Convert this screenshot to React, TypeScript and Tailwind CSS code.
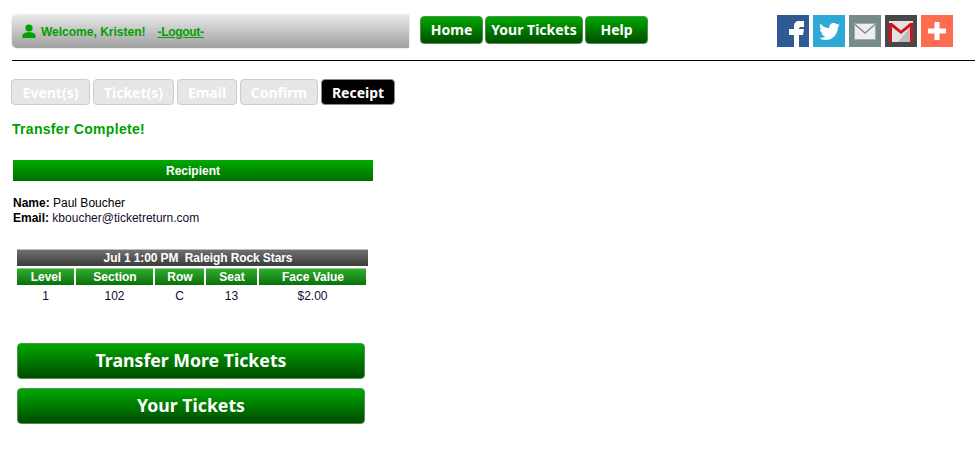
import React from "react";
import { FaTwitter } from "react-icons/fa";

const noto = "font-['Noto_Sans','Open_Sans',sans-serif] font-bold text-white";
const arial = "font-['Liberation_Sans',Arial,sans-serif]";
const greenBtn = "bg-gradient-to-b from-[#00a900] to-[#004d00] border border-[#4f8f4f] rounded-[4px]";

function Social({ bg, children }: { bg: string; children: React.ReactNode }) {
  return <div className={`w-8 h-8 overflow-hidden flex items-center justify-center ${bg}`}>{children}</div>;
}

function Header() {
  return (
    <div className="ml-3 mr-[2px] h-[61px] border-b border-black flex items-start">
      <div className={`w-[397px] h-[33px] mt-[15px] rounded-l-[5px] bg-gradient-to-b from-[#e9e9e9] to-[#a0a0a0] shadow-[0_0_2px_rgba(0,0,0,0.25)] flex items-center pl-[10px] text-[12px] font-bold text-[#00a000] ${arial}`}>
        <svg width="14" height="14" viewBox="0 0 14 14" className="mr-[5px] mb-[1px]">
          <circle cx="7" cy="4" r="3.6" fill="#00a000" />
          <path d="M0.5 14 V11.5 C0.5 9.5 3 8.8 5 8.2 L9 8.2 C11 8.8 13.5 9.5 13.5 11.5 V14 Z" fill="#00a000" />
        </svg>
        <span>Welcome, Kristen!</span>
        <span className="ml-3 underline tracking-[-0.3px]">-Logout-</span>
      </div>
      <nav className="ml-[11px] mt-[16px] flex gap-[2px]">
        {[["Home", "w-[63px]"], ["Your Tickets", "w-[98px]"], ["Help", "w-[63px]"]].map(([t, w]) => (
          <div key={t} className={`h-[28px] pb-[1px] flex items-center justify-center text-[14px] ${w} ${greenBtn} ${noto}`}>{t}</div>
        ))}
      </nav>
      <div className="ml-[129px] mt-[15px] flex gap-1">
        <Social bg="bg-[#2f5a94]">
          <svg width="32" height="32" viewBox="0 0 32 32">
            <path d="M17 32 V20 H12 V14 H17 V11 C17 8 19 6 22 6 H27 V12 H24.5 C22.7 12 22 12.6 22 14 H27 L26 20 H22 V32 Z" fill="#fff" />
          </svg>
        </Social>
        <Social bg="bg-[#2ea8d6]">
          <FaTwitter className="text-white w-[21px] h-[21px]" />
        </Social>
        <Social bg="bg-[#768c8c]">
          <svg width="22" height="17" viewBox="0 0 22 17">
            <rect x="0" y="0" width="22" height="17" fill="#eeeeee" />
            <path d="M0.5 1 L11 10 L21.5 1" fill="none" stroke="#7d8d8d" strokeWidth="1.4" />
            <rect x="0.5" y="0.5" width="21" height="16" fill="none" stroke="#a8a8a8" />
          </svg>
        </Social>
        <Social bg="bg-[#484848]">
          <svg width="24" height="21" viewBox="0 0 24 21">
            <rect x="0" y="0" width="24" height="21" fill="#e2e2e2" />
            <path d="M24 3 V21 H9 Z" fill="#bdbdbd" />
            <path d="M0 21 V2 H3 L12 9.5 L21 2 H24 V21 H21 V6 L12 13 L3 6 V21 Z" fill="#d2121c" />
          </svg>
        </Social>
        <Social bg="bg-[#fe6c50]">
          <svg width="18" height="18" viewBox="0 0 18 18">
            <path d="M6.5 0 H11.5 V6.5 H18 V11.5 H11.5 V18 H6.5 V11.5 H0 V6.5 H6.5 Z" fill="#fff" />
          </svg>
        </Social>
      </div>
    </div>
  );
}

function Tabs() {
  const off = "bg-[#e6e6e6] border border-[#cccccc]";
  return (
    <div className="ml-[11px] mt-[18px] flex gap-[3px]">
      {[["Event(s)", "w-[79px]"], ["Ticket(s)", "w-[81px]"], ["Email", "w-[60px]"], ["Confirm", "w-[78px]"]].map(([t, w]) => (
        <div key={t} className={`h-[26px] rounded-[4px] flex items-center justify-center text-[14px] ${w} ${off} ${noto}`}>{t}</div>
      ))}
      <div className={`h-[26px] w-[74px] rounded-[4px] flex items-center justify-center text-[14px] bg-black border border-[#888] ${noto}`}>Receipt</div>
    </div>
  );
}

function TicketTable() {
  const cols = [
    ["Level", "1", "w-[57px]"],
    ["Section", "102", "w-[77px]"],
    ["Row", "C", "w-[49px]"],
    ["Seat", "13", "w-[51px]"],
    ["Face Value", "$2.00", "w-[107px]"],
  ];
  return (
    <div className="ml-[17px] mt-[23px] w-[351px]">
      <div className="h-[17px] pl-[11px] tracking-[-0.1px] border-t border-[#bbbbbb] bg-gradient-to-b from-[#707070] to-[#3c3c3c] text-white text-[12px] font-bold flex items-center justify-center">
        Jul 1 1:00 PM&nbsp; Raleigh Rock Stars
      </div>
      <div className="mt-[2px] flex gap-[2px]">
        {cols.map(([h, v, w]) => (
          <div key={h} className={w}>
            <div className="h-[17px] pl-[1px] border-t border-[#8fce8f] bg-gradient-to-b from-[#2eae2e] to-[#0a700a] text-white text-[12px] font-bold flex items-center justify-center">{h}</div>
            <div className="h-[22px] text-[12px] text-[#140a30] flex items-center justify-center">{v}</div>
          </div>
        ))}
      </div>
    </div>
  );
}

export default function App() {
  return (
    <div className={`w-[977px] h-[454px] bg-white overflow-hidden ${arial}`}>
      <Header />
      <Tabs />
      <div className="ml-3 mt-[16px] h-[16px] text-[14px] tracking-[0.3px] leading-[16px] font-bold text-[#00a000]">Transfer Complete!</div>
      <div className="ml-[13px] mt-[23px] w-[360px] h-[21px] bg-gradient-to-b from-[#00aa00] to-[#007000] text-white text-[12px] font-bold flex items-center justify-center">Recipient</div>
      <div className="ml-[13px] mt-[15px] text-[12px] leading-[15px] text-black">
        <div><b>Name:</b> Paul Boucher</div>
        <div><b>Email:</b> <span className="text-[#1a0a30]">kboucher@ticketreturn.com</span></div>
      </div>
      <TicketTable />
      <div className="ml-[17px] mt-[36px] w-[348px] flex flex-col gap-[9px]">
        <div className={`h-[36px] pb-[2px] flex items-center justify-center text-[17.7px] ${greenBtn} ${noto}`}>Transfer More Tickets</div>
        <div className={`h-[36px] pb-[2px] flex items-center justify-center text-[17.7px] ${greenBtn} ${noto}`}>Your Tickets</div>
      </div>
    </div>
  );
}
